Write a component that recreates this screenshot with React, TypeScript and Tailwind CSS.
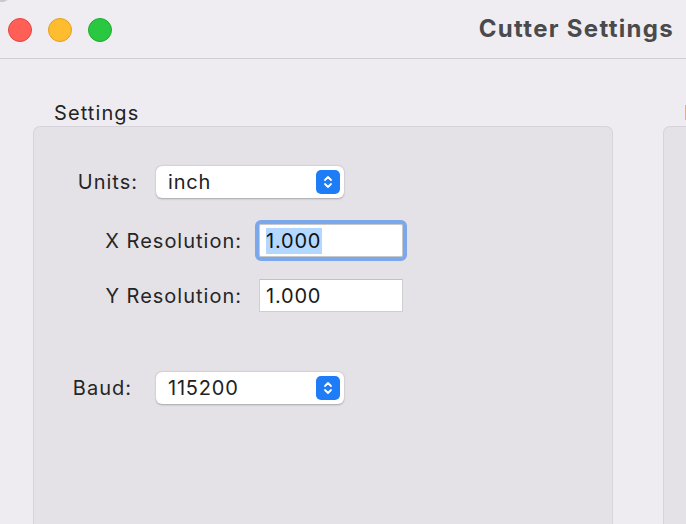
import React from 'react'

const FONT = { fontFamily: 'Inter, "Noto Sans", "Liberation Sans", sans-serif' }

const Stepper = () => (
  <div className="w-[24px] h-[24px] rounded-[5px] bg-[#1e7cf6] flex items-center justify-center">
    <svg width="10" height="16" viewBox="0 0 10 16" fill="none">
      <path d="M2 6 L5 3 L8 6" stroke="white" strokeWidth="1.8" strokeLinecap="round" strokeLinejoin="round" />
      <path d="M2 10 L5 13 L8 10" stroke="white" strokeWidth="1.8" strokeLinecap="round" strokeLinejoin="round" />
    </svg>
  </div>
)

const Popup = ({ value }: { value: string }) => (
  <div className="w-[188px] h-[32px] bg-white rounded-[6px] shadow-[0_0.5px_2px_rgba(0,0,0,0.28)] flex items-center justify-between pl-[12px] pr-[4px]">
    <span className="text-[20px] tracking-[0.8px] text-[#222]">{value}</span>
    <Stepper />
  </div>
)

export default function App() {
  return (
    <div className="w-[686px] h-[524px] overflow-hidden flex flex-col bg-[#eeecf1]" style={FONT}>
      {/* desktop strip behind window */}
      <div className="h-[2px] flex shrink-0">
        <div className="w-[265px] bg-[#c9c8cc]" />
        <div className="w-[65px] bg-[#3d3d3f]" />
        <div className="flex-1 bg-[#e6dcbd]" />
      </div>

      <div className="flex-1 flex flex-col bg-[#eeecf1] rounded-tl-[10px] -mt-[2px]">
        {/* title bar */}
        <div className="h-[59px] shrink-0 flex items-center justify-between pl-[8px] pr-[12px] border-b border-[#cfcdd3] bg-[#efedf2] rounded-tl-[10px]">
          <div className="flex items-center gap-[16px] mt-[1px]">
            <div className="w-[24px] h-[24px] rounded-full bg-[#ff5f57] border border-[#e2463f]" />
            <div className="w-[24px] h-[24px] rounded-full bg-[#febc2e] border border-[#dfa125]" />
            <div className="w-[24px] h-[24px] rounded-full bg-[#2ac840] border border-[#1fab2e]" />
          </div>
          <span className="text-[24px] font-bold text-[#4a4a4c] tracking-[1.3px]">Cutter Settings</span>
        </div>

        {/* body */}
        <div className="flex-1 flex gap-[50px] pl-[33px] pt-[41px]">
          <div className="w-[580px] flex flex-col shrink-0">
            <div className="pl-[21px] text-[20px] leading-[26px] tracking-[1.1px] text-[#232323] h-[26px]">Settings</div>
            <div className="flex-1 bg-[#e4e2e7] border border-[#d6d4da] border-b-0 rounded-t-[7px] flex flex-col pt-[39px] tracking-[1px]">
              <div className="flex items-center">
                <span className="w-[104px] text-right text-[20px] text-[#262626]">Units:</span>
                <div className="ml-[18px]">
                  <Popup value="inch" />
                </div>
              </div>

              <div className="flex items-center mt-[26px]">
                <span className="w-[208px] text-right text-[20px] text-[#262626]">X Resolution:</span>
                <div className="ml-[17px] w-[144px] h-[33px] bg-white border border-[#c9c9cc] rounded-[2px] outline outline-[4px] outline-[#7ba8ea] outline-offset-0 flex items-center pl-[6px]">
                  <span className="text-[20px] leading-[26px] tracking-[0.8px] text-[#111] bg-[#b3d7ff] pr-[1px]">1.000</span>
                </div>
              </div>

              <div className="flex items-center mt-[22px]">
                <span className="w-[208px] text-right text-[20px] text-[#262626]">Y Resolution:</span>
                <div className="ml-[17px] w-[144px] h-[33px] bg-white border border-[#cfcfd2] border-t-[#c2c2c5] flex items-center pl-[6px]">
                  <span className="text-[20px] tracking-[0.8px] text-[#1a1a1a]">1.000</span>
                </div>
              </div>

              <div className="flex items-center mt-[60px]">
                <span className="w-[98px] text-right text-[20px] text-[#262626]">Baud:</span>
                <div className="ml-[24px]">
                  <Popup value="115200" />
                </div>
              </div>
            </div>
          </div>

          <div className="flex-1 flex flex-col">
            <div className="pl-[21px] text-[20px] leading-[26px] text-[#232323] h-[26px] whitespace-nowrap">Port</div>
            <div className="flex-1 bg-[#e4e2e7] border border-[#d6d4da] border-r-0 border-b-0 rounded-tl-[7px]" />
          </div>
        </div>
      </div>
    </div>
  )
}
